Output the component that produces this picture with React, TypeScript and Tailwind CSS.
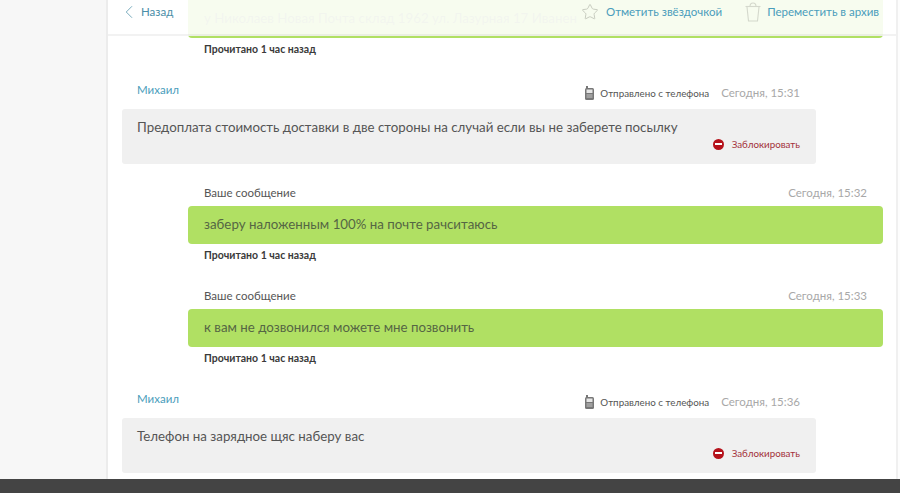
import { ChevronLeft, Star } from 'lucide-react';

function PhoneIcon() {
  return (
    <svg width="9" height="14" viewBox="0 0 9 14" className="shrink-0">
      <rect x="0" y="2" width="9" height="12" rx="1.500" fill="#777" />
      <rect x="1" y="0" width="2" height="3" fill="#777" />
      <rect x="1.500" y="3.500" width="6" height="3.500" fill="#e6e6e6" />
      <rect x="1.500" y="8.500" width="6" height="1" fill="#c8c8c8" />
      <rect x="1.500" y="10.500" width="6" height="1" fill="#c8c8c8" />
    </svg>
  );
}

function TrashIcon() {
  return (
    <svg width="16" height="20" viewBox="0 0 16 20" fill="none" stroke="#d4d8cc" strokeWidth="1.100">
      <path d="M0.500 4.500h15" />
      <path d="M5 4.500c0-2.500 1-3.500 3-3.500s3 1 3 3.500" />
      <path d="M2 5 3.500 19h9L14 5" />
    </svg>
  );
}

function BlockLink() {
  return (
    <div className="flex justify-end items-center gap-[8px] pr-[16px] h-[14px]">
      <span className="w-[11px] h-[11px] rounded-full bg-[#b5121b] flex items-center justify-center">
        <span className="w-[7px] h-[2px] bg-white" />
      </span>
      <span className="text-[9.800px] text-[#a3303a]">Заблокировать</span>
    </div>
  );
}

function Incoming({ time, text, mt }: { time: string; text: string; mt: string }) {
  return (
    <div className={mt}>
      <div className="flex justify-between h-[22px] pl-[29px] pr-[96px]">
        <span className="text-[11.500px] text-[#4a9dbb]">Михаил</span>
        <div className="flex items-center gap-[6px] h-[22px] mt-[1px]">
          <PhoneIcon />
          <span className="text-[9.800px] text-[#555]">Отправлено с телефона</span>
          <span className="text-[11.500px] text-[#a8a8a8] ml-[6px]">{time}</span>
        </div>
      </div>
      <div className="ml-[14px] w-[694px] h-[55px] mt-[6px] bg-[#f0f0f0] rounded-[3px] pt-[9px]">
        <p className="pl-[15px] text-[13.300px] leading-[18px] text-[#555]">{text}</p>
        <div className="mt-[1px]">
          <BlockLink />
        </div>
      </div>
    </div>
  );
}

function Outgoing({ time, text, mt }: { time: string; text: string; mt: string }) {
  return (
    <div className={mt}>
      <div className="flex justify-between items-center pl-[96px] pr-[29px] h-[18px]">
        <span className="text-[11.500px] text-[#555]">Ваше сообщение</span>
        <span className="text-[11.500px] text-[#a8a8a8]">{time}</span>
      </div>
      <div className="ml-[80px] w-[695px] h-[38px] mt-[4px] bg-[#b0e063] rounded-[4px] pl-[16px] flex items-center">
        <span className="text-[13.300px] text-[#556644]">{text}</span>
      </div>
      <p className="ml-[96px] mt-[4px] text-[10.500px] leading-[14px] font-bold text-[#3a3a3a]">Прочитано 1 час назад</p>
    </div>
  );
}

export default function App() {
  return (
    <div className="w-[900px] h-[493px] overflow-hidden flex flex-col bg-white font-['Lato','Noto_Sans',sans-serif]">
      <div className="flex-1 min-h-0 flex">
        <div className="w-[108px] bg-[#f7f7f7] border-r-[2px] border-[#ececec]" />
        <div className="relative w-[788px] bg-white overflow-hidden">
          {/* Sticky header over the scrolled thread */}
          <div className="absolute top-0 left-0 right-0 h-[36px] z-10 border-b-[2px] border-black/5 bg-white/90 flex items-center pb-[10px]">
            <ChevronLeft size={22} strokeWidth={1} className="ml-[10px] text-[#6fa5b8]" />
            <span className="ml-[1px] text-[11.500px] text-[#4a8ea8]">Назад</span>
            <div className="ml-auto flex items-center pr-[17px]">
              <Star size={18} strokeWidth={1} className="text-[#b8bcb0]" />
              <span className="ml-[7px] text-[11.500px] text-[#4a9dbb]">Отметить звёздочкой</span>
              <span className="ml-[23px]"><TrashIcon /></span>
              <span className="ml-[6px] text-[11.500px] text-[#4a9dbb]">Переместить в архив</span>
            </div>
          </div>

          <div className="ml-[80px] w-[695px] h-[38px] bg-[#b0e063] rounded-b-[4px] pl-[16px] pt-[5px]">
            <span className="text-[13.300px] text-[#7d9a5a]">у Николаев Новая Почта склад 1962 ул. Лазурная 17 Иванен</span>
          </div>
          <p className="ml-[96px] mt-[4px] text-[10.500px] leading-[14px] font-bold text-[#3a3a3a]">Прочитано 1 час назад</p>

          <Incoming mt="mt-[25px]" time="Сегодня, 15:31" text="Предоплата стоимость доставки в две стороны на случай если вы не заберете посылку" />
          <Outgoing mt="mt-[20px]" time="Сегодня, 15:32" text="заберу наложенным 100% на почте рачситаюсь" />
          <Outgoing mt="mt-[25px]" time="Сегодня, 15:33" text="к вам не дозвонился можете мне позвонить" />
          <Incoming mt="mt-[25px]" time="Сегодня, 15:36" text="Телефон на зарядное щяс наберу вас" />
        </div>
        <div className="flex-1 bg-[#fdfdfd] border-l-[2px] border-[#f0f0f0]" />
      </div>
      <div className="h-[14px] bg-[#444444]" />
    </div>
  );
}
